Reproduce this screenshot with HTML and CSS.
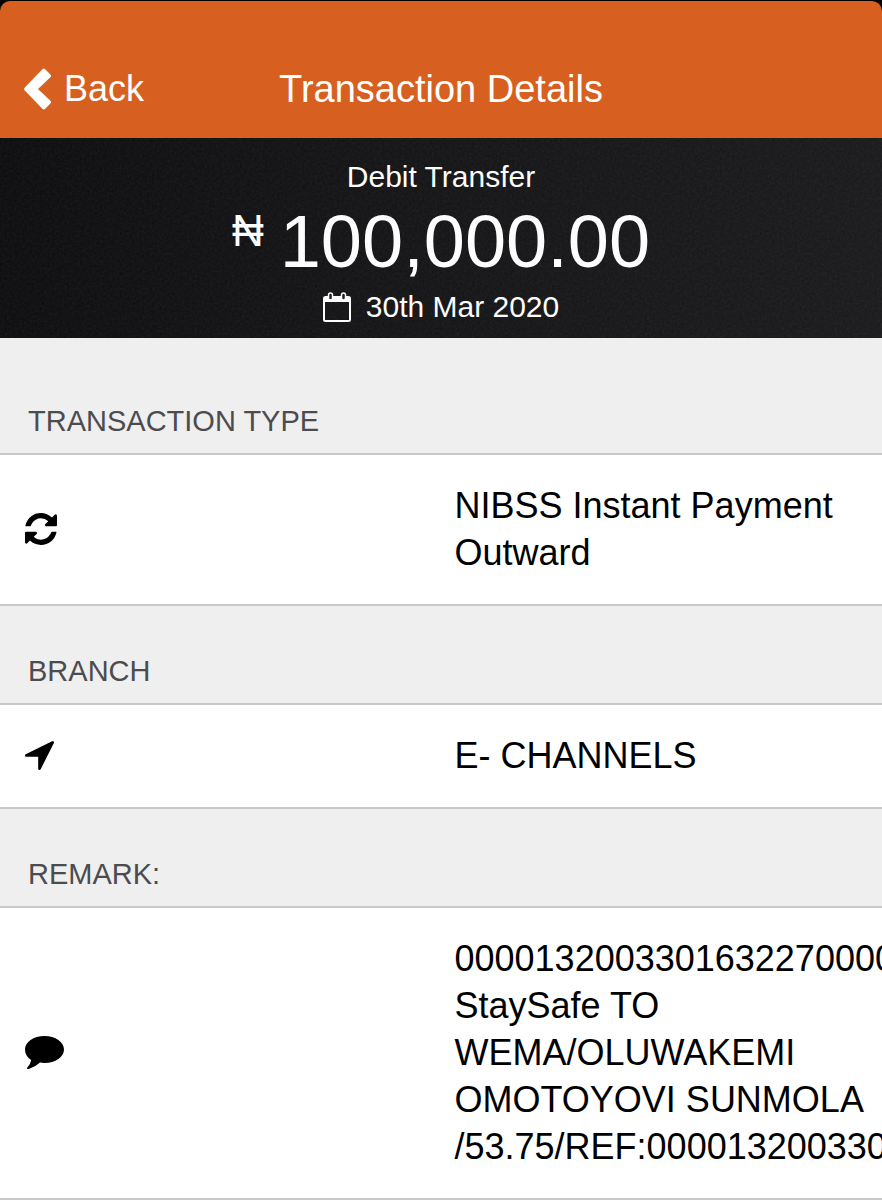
FILE: index.html
```html
<!DOCTYPE html>
<html lang="en">
<head>
  <meta charset="UTF-8" />
  <meta name="viewport" content="width=device-width, initial-scale=1.0"/>
  <title>Transaction Details</title>
  <link rel="stylesheet" href="styles.css">
</head>
<body>

<header class="navbar">
  <a class="back" href="#">
    <svg class="back-icon" width="28" height="42" viewBox="0 0 28 42" aria-hidden="true">
      <path d="M21.200 1.200 26.400 6.400q1.400 1.400 0 2.800L14 21 26.400 32.800q1.400 1.400 0 2.800L21.200 40.800q-1.400 1.400-2.800 0L.8 22.400q-1.400-1.400 0-2.800L18.400 1.200q1.400-1.400 2.800 0z" fill="#fff"/>
    </svg>
    Back
  </a>
  <h1>Transaction Details</h1>
</header>

<section class="summary">
  <svg class="grain" width="100%" height="100%" aria-hidden="true">
    <filter id="noise" x="0" y="0" width="100%" height="100%">
      <feTurbulence type="fractalNoise" baseFrequency="0.4" numOctaves="2"/>
      <feColorMatrix type="saturate" values="0"/>
    </filter>
    <rect width="100%" height="100%" filter="url(#noise)"/>
  </svg>
  <p class="kind">Debit Transfer</p>
  <p class="amount"><span class="currency">₦</span>100,000.00</p>
  <p class="date">
    <svg width="28" height="30" viewBox="0 0 28 30" aria-hidden="true">
      <path d="M2.500 4H25.500Q28 4 28 6.500V27.500Q28 30 25.500 30H2.500Q0 30 0 27.500V6.500Q0 4 2.500 4ZM2 10V28H26V10Z" fill="#fff" fill-rule="evenodd"/>
      <rect x="5.500" y="1" width="4" height="7" rx="2" fill="#17171a" stroke="#fff" stroke-width="1.500"/>
      <rect x="18.500" y="1" width="4" height="7" rx="2" fill="#17171a" stroke="#fff" stroke-width="1.500"/>
    </svg>
    30th Mar 2020
  </p>
</section>

<main class="details">
  <h2>TRANSACTION TYPE</h2>
  <div class="row">
    <div class="icon">
      <svg width="32" height="32" viewBox="0 0 1536 1536" aria-hidden="true">
        <path d="M1511 928q0 5-1 7-64 268-268 434.500T764 1536q-146 0-282.500-55T238 1324l-129 129q-19 19-45 19t-45-19-19-45V960q0-26 19-45t45-19h448q26 0 45 19t19 45-19 45l-137 137q71 66 161 102t187 36q134 0 250-65t186-179q11-17 53-117 8-23 30-23h192q13 0 22.500 9.500t9.500 22.500zm25-800v448q0 26-19 45t-45 19h-448q-26 0-45-19t-19-45 19-45l138-138Q969 256 768 256q-134 0-250 65T332 500q-11 17-53 117-8 23-30 23H50q-13 0-22.500-9.500T18 608v-7q65-268 270-434.500T768 0q146 0 284 55.500T1297 212l130-129q19-19 45-19t45 19 19 45z"/>
      </svg>
    </div>
    <div class="value">NIBSS Instant Payment Outward</div>
  </div>

  <h2>BRANCH</h2>
  <div class="row">
    <div class="icon">
      <svg width="29" height="29" viewBox="0 0 1408 1408" aria-hidden="true">
        <path d="M1401 93 761 1373q-17 35-57 35-5 0-15-2-22-5-35.500-22.500T640 1344V768H64q-22 0-39.500-13.500T2 719t4-42 29-30L1315 7q13-7 29-7 27 0 45 19 15 14 18.500 34.500T1401 93z"/>
      </svg>
    </div>
    <div class="value">E- CHANNELS</div>
  </div>

  <h2>REMARK:</h2>
  <div class="row">
    <div class="icon">
      <svg width="39" height="34" viewBox="0 0 39 34" aria-hidden="true">
        <path d="M19.500 0C30.500 0 39 6 39 13.500S30.500 27 19.500 27q-2.300 0-4.500-.4Q10.500 31 4.300 32.800q-1.700.4-2 .2-.8-.7.100-1.600 3-3 3.800-7.400C2.300 21.500 0 18 0 13.500 0 6 8.500 0 19.500 0z"/>
      </svg>
    </div>
    <div class="value">000013200330163227000013200330 StaySafe TO WEMA/OLUWAKEMI OMOTOYOVI SUNMOLA /53.75/REF:000013200330163227</div>
  </div>
</main>

</body>
</html>
```
FILE: styles.css
```css
body {
  margin: 0;
  font-family: "Helvetica Neue", "Liberation Sans", Arial, sans-serif;
  background: linear-gradient(#000 40px, #efeff0 40px);
  color: #000;
}
h1, h2, p {
  margin: 0;
  font-weight: 300;
}
.navbar {
  display: grid;
  grid-template-columns: 1fr auto 1fr;
  align-items: center;
  margin-top: 1px;
  padding: 62px 24px 23px;
  background: #d76021;
  border-radius: 10px 10px 0 0;
  color: #fff;
}
.navbar h1 {
  font-size: 38px;
  line-height: 52px;
}
.back {
  display: flex;
  align-items: center;
  gap: 12px;
  color: #fff;
  font-size: 36px;
  line-height: 52px;
  text-decoration: none;
}
.summary {
  position: relative;
  padding: 20px 0 12px;
  background: linear-gradient(100deg, #0b0b0d, #121214 40%, #19191c);
  color: #fff;
  text-align: center;
}
.grain {
  position: absolute;
  top: 0;
  left: 0;
  opacity: 0.08;
}
.kind, .date {
  font-size: 30px;
  line-height: 38px;
}
.amount {
  display: flex;
  justify-content: center;
  gap: 16px;
  font-size: 74px;
  line-height: 92px;
}
.currency {
  font-size: 44px;
  line-height: 70px;
}
.date {
  display: flex;
  align-items: center;
  justify-content: center;
  gap: 15px;
}
.details {
  overflow: hidden;
}
.details h2 {
  padding: 48px 28px 14px;
  color: #4c4c4e;
  font-size: 29px;
  line-height: 35px;
}
.details h2:first-child {
  padding-top: 66px;
}
.row {
  display: grid;
  grid-template-columns: 1fr 1fr;
  align-items: center;
  padding: 27px 10px 28px 25px;
  background: #fff;
  border-top: 2px solid #c8c8ca;
  border-bottom: 2px solid #c8c8ca;
}
.icon svg {
  display: block;
}
.value {
  min-width: 0;
  padding-left: 6px;
  font-size: 36px;
  line-height: 47px;
}
```
